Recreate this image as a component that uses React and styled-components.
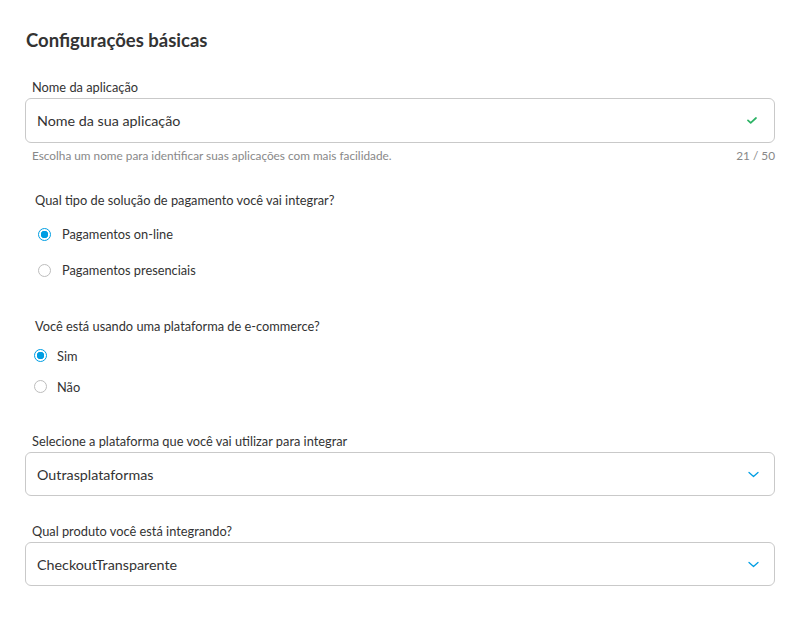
import styled, { createGlobalStyle } from "styled-components";

const GlobalStyle = createGlobalStyle`
	body {
		margin: 0;
		background: #fff;
		font-family: Lato, "Open Sans", sans-serif;
		color: #333;
	}
`;

const Check = () => (
	<svg width="10" height="7" viewBox="0 0 10 7">
		<path d="M1 3.4 L3.7 5.8 L9 1" fill="none" stroke="#2cb365" strokeWidth="1.7" strokeLinecap="round" strokeLinejoin="round" />
	</svg>
);

const Chevron = () => (
	<svg width="11" height="7" viewBox="0 0 11 7">
		<path d="M1 1.5 L5.5 5.5 L10 1.5" fill="none" stroke="#009ee3" strokeWidth="1.3" strokeLinecap="round" strokeLinejoin="round" />
	</svg>
);

const RadioGroup = ({ question, options, selected, wide }) => (
	<Fieldset>
		<Question wide={wide}>{question}</Question>
		{options.map((opt) => (
			<Option key={opt} wide={wide}>
				<Radio checked={opt === selected} />
				<span>{opt}</span>
			</Option>
		))}
	</Fieldset>
);

const SelectField = ({ label, value }) => (
	<Field>
		<Label>{label}</Label>
		<Box select>
			<span>{value}</span>
			<Chevron />
		</Box>
	</Field>
);

export default () => (
	<Page>
		<GlobalStyle />
		<Title>Configurações básicas</Title>
		<Field first>
			<Label>Nome da aplicação</Label>
			<Box>
				<span>Nome da sua aplicação</span>
				<Check />
			</Box>
			<Helper>
				<span>Escolha um nome para identificar suas aplicações com mais facilidade.</span>
				<span>21 / 50</span>
			</Helper>
		</Field>
		<RadioGroup
			question="Qual tipo de solução de pagamento você vai integrar?"
			options={["Pagamentos on-line", "Pagamentos presenciais"]}
			selected="Pagamentos on-line"
			wide
		/>
		<RadioGroup
			question="Você está usando uma plataforma de e-commerce?"
			options={["Sim", "Não"]}
			selected="Sim"
		/>
		<SelectField label="Selecione a plataforma que você vai utilizar para integrar" value="Outrasplataformas" />
		<SelectField label="Qual produto você está integrando?" value="CheckoutTransparente" />
	</Page>
);

const Page = styled.main`
	display: flex;
	flex-direction: column;
	width: 750px;
	padding: 29px 24px 30px 25px;
`;

const Title = styled.h2`
	font-size: 18.5px;
	font-weight: 700;
	margin: 0 0 0 1px;
	line-height: 22px;
	color: #333;
`;

const Field = styled.div`
	margin-top: ${(p) => (p.first ? "28px" : "31px")};

	& + & {
		margin-top: 27px;
	}
`;

const Label = styled.div`
	font-size: 12.8px;
	line-height: 16px;
	margin: 0 0 3px 7px;
	color: #333;
`;

const Box = styled.div`
	display: flex;
	align-items: center;
	justify-content: space-between;
	height: ${(p) => (p.select ? "44px" : "45px")};
	box-sizing: border-box;
	border: 1px solid #c9c9c9;
	border-radius: 6px;
	padding: ${(p) => (p.select ? "0 15px 0 11px" : "0 17px 0 11px")};
	font-size: 14.3px;
	color: #333;
`;

const Helper = styled.div`
	display: flex;
	justify-content: space-between;
	font-size: 11.8px;
	color: #888;
	margin: 6px 0 0 7px;
	line-height: 14px;
`;

const Fieldset = styled.div`
	margin-top: ${(p) => "28px"};

	& + & {
		margin-top: 29px;
	}
`;

const Question = styled.div`
	font-size: 12.8px;
	line-height: 18px;
	margin-left: 10px;
	margin-bottom: ${(p) => (p.wide ? "7px" : "5px")};
`;

const Option = styled.label`
	display: flex;
	align-items: center;
	gap: ${(p) => (p.wide ? "11px" : "10px")};
	margin-left: ${(p) => (p.wide ? "13px" : "9px")};
	font-size: 12.8px;
	height: ${(p) => (p.wide ? "36px" : "31px")};
`;

const Radio = styled.span`
	width: 13px;
	height: 13px;
	border-radius: 50%;
	box-sizing: border-box;
	border: 1px solid ${(p) => (p.checked ? "#009ee3" : "#bdbdbd")};
	background: ${(p) => (p.checked ? "radial-gradient(circle, #009ee3 0 3.5px, #fff 4px)" : "#fff")};
	border-width: ${(p) => (p.checked ? "1.5px" : "1px")};
`;
